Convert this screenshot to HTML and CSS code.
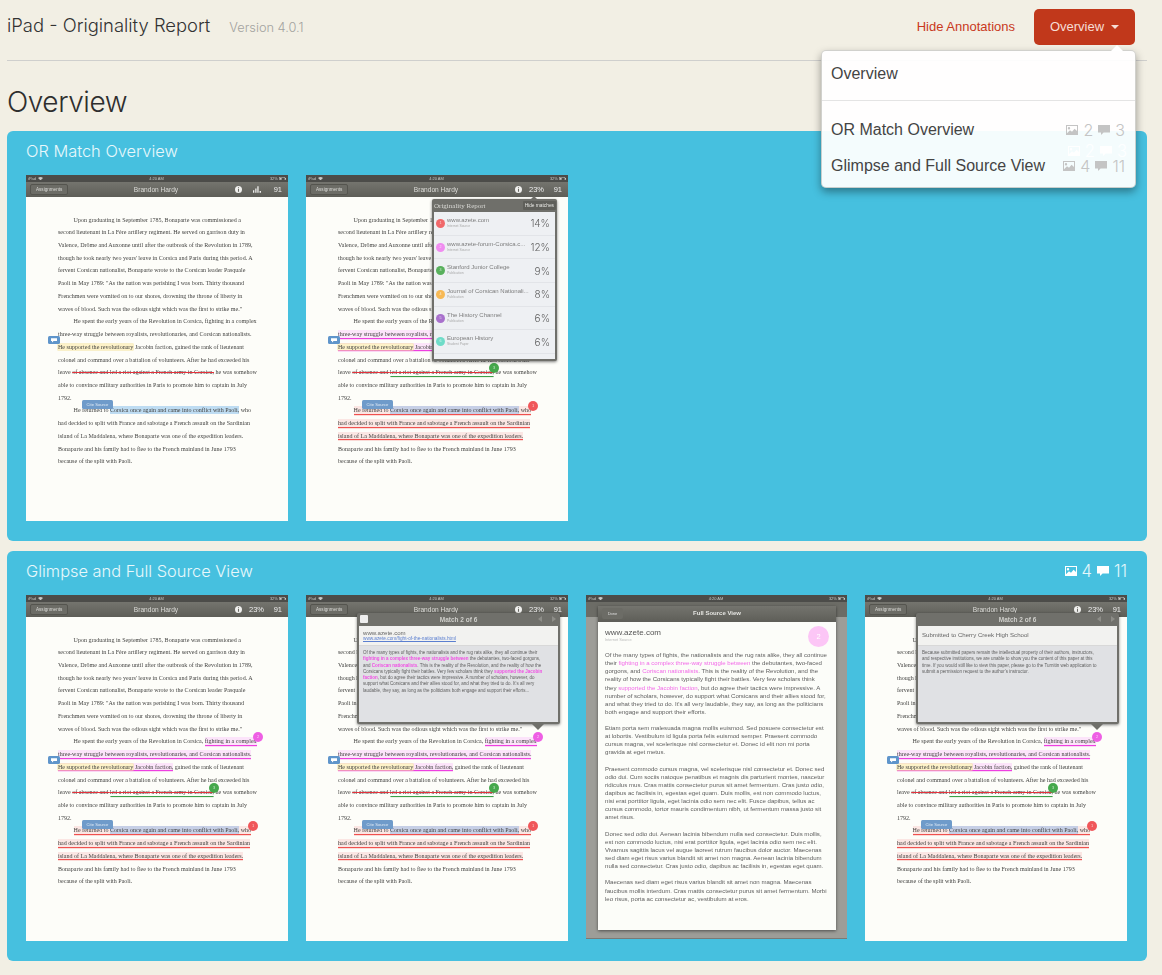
FILE: index.html
```html
<!DOCTYPE html>
<html lang="en">
<head>
<meta charset="utf-8">
<title>iPad - Originality Report</title>
<link rel="stylesheet" href="styles.css">
</head>
<body>
<svg class="defs" width="0" height="0" aria-hidden="true">
  <symbol id="i-img" viewBox="0 0 12 10"><path fill-rule="evenodd" d="M0 0h12v10H0zM1 1v7.2l3-3 2 1.6 2.6-3L11 6V1zM3 2a1.2 1.2 0 1 0 0 2.4A1.2 1.2 0 0 0 3 2z"/></symbol>
  <symbol id="i-msg" viewBox="0 0 12 10"><path d="M0 0h12v7.4H5.6L3 10V7.4H0z"/></symbol>
  <symbol id="i-info" viewBox="0 0 8 8"><path fill-rule="evenodd" d="M4 0a4 4 0 1 1 0 8 4 4 0 0 1 0-8zM3.4 1.4v1.1h1.2V1.4zM3.4 3.3v3.3h1.2V3.3z"/></symbol>
  <symbol id="i-bars" viewBox="0 0 10 8"><path d="M0 5h1.6v3H0zM2.8 2.6h1.6V8H2.8zM5.4 0H7v8H5.4zM8.2 6H10v2H8.2z"/></symbol>
  <symbol id="i-wifi" viewBox="0 0 6 4"><path d="M0 1.2C1.7-.4 4.3-.4 6 1.2L3 4z"/></symbol>
  <symbol id="i-batt" viewBox="0 0 8 4"><path fill-rule="evenodd" d="M0 0h7v1h1v2H7v1H0zM.5.5v3h6v-3zM1 1h2v2H1z"/></symbol>
</svg>

<header class="top">
  <div class="brand">
    <h1 class="brand-title">iPad - Originality Report</h1>
    <span class="brand-version">Version 4.0.1</span>
  </div>
  <a class="annot">Hide Annotations</a>
  <button class="menu-btn">Overview<i class="menu-caret"></i></button>
  <nav class="menu">
    <a class="menu-row menu-first">Overview</a>
    <a class="menu-row">OR Match Overview<span class="meta"><svg class="ic"><use href="#i-img"/></svg>2<svg class="ic ic-m"><use href="#i-msg"/></svg>3</span></a>
    <a class="menu-row">Glimpse and Full Source View<span class="meta"><svg class="ic"><use href="#i-img"/></svg>4<svg class="ic ic-m"><use href="#i-msg"/></svg>11</span></a>
  </nav>
</header>

<h2 class="page-title">Overview</h2>

<section class="panel">
  <div class="panel-head">
    <h3 class="panel-title">OR Match Overview</h3>
    <span class="panel-meta"><svg class="ic"><use href="#i-img"/></svg>2<svg class="ic ic-m"><use href="#i-msg"/></svg>3</span>
  </div>
  <div class="shots">

    <article class="shot">
      <div class="status"><span>iPad <svg class="wifi"><use href="#i-wifi"/></svg></span><span>4:20 AM</span><span>32% <svg class="batt"><use href="#i-batt"/></svg></span></div>
      <div class="bar">
        <span class="back">Assignments</span><span class="who">Brandon Hardy</span>
        <span class="tools"><svg class="t-info"><use href="#i-info"/></svg><svg class="t-bars"><use href="#i-bars"/></svg><b>91</b></span>
      </div>
      <div class="doc">
        <div class="ln in">Upon graduating in September 1785, Bonaparte was commissioned a</div>
        <div class="ln">second lieutenant in La Fère artillery regiment. He served on garrison duty in</div>
        <div class="ln">Valence, Drôme and Auxonne until after the outbreak of the Revolution in 1789,</div>
        <div class="ln">though he took nearly two years' leave in Corsica and Paris during this period. A</div>
        <div class="ln">fervent Corsican nationalist, Bonaparte wrote to the Corsican leader Pasquale</div>
        <div class="ln">Paoli in May 1789: "As the nation was perishing I was born. Thirty thousand</div>
        <div class="ln">Frenchmen were vomited on to our shores, drowning the throne of liberty in</div>
        <div class="ln">waves of blood. Such was the odious sight which was the first to strike me."</div>
        <div class="ln in">He spent the early years of the Revolution in Corsica, fighting in a complex</div>
        <div class="ln">three-way struggle between royalists, revolutionaries, and Corsican nationalists.</div>
        <div class="ln"><span class="yel">He supported the revolutionary</span> Jacobin faction, gained the rank of lieutenant</div>
        <div class="ln">colonel and command over a battalion of volunteers. After he had exceeded his</div>
        <div class="ln">leave <span class="strike">of absence and led a riot against a French army in Corsica,</span> he was somehow</div>
        <div class="ln">able to convince military authorities in Paris to promote him to captain in July</div>
        <div class="ln">1792.</div>
        <div class="ln in">He returned to <span class="blue">Corsica once again and came into conflict with Paoli,</span> who</div>
        <div class="ln">had decided to split with France and sabotage a French assault on the Sardinian</div>
        <div class="ln">island of La Maddalena, where Bonaparte was one of the expedition leaders.</div>
        <div class="ln">Bonaparte and his family had to flee to the French mainland in June 1793</div>
        <div class="ln">because of the split with Paoli.</div>
      </div>
      <svg class="chip" viewBox="0 0 12 8"><path d="M3 2.2h6v2.8H5.6L4 6.4V5H3z"/></svg>
      <span class="cite">Cite Source</span>
    </article>

    <article class="shot">
      <div class="status"><span>iPad <svg class="wifi"><use href="#i-wifi"/></svg></span><span>4:20 AM</span><span>32% <svg class="batt"><use href="#i-batt"/></svg></span></div>
      <div class="bar">
        <span class="back">Assignments</span><span class="who">Brandon Hardy</span>
        <span class="tools"><svg class="t-info"><use href="#i-info"/></svg><span class="pct">23%</span><b>91</b></span>
      </div>
      <div class="doc">
        <div class="ln in">Upon graduating in September 1785, Bonaparte was commissioned a</div>
        <div class="ln">second lieutenant in La Fère artillery regiment. He served on garrison duty in</div>
        <div class="ln">Valence, Drôme and Auxonne until after the outbreak of the Revolution in 1789,</div>
        <div class="ln">though he took nearly two years' leave in Corsica and Paris during this period. A</div>
        <div class="ln">fervent Corsican nationalist, Bonaparte wrote to the Corsican leader Pasquale</div>
        <div class="ln">Paoli in May 1789: "As the nation was perishing I was born. Thirty thousand</div>
        <div class="ln">Frenchmen were vomited on to our shores, drowning the throne of liberty in</div>
        <div class="ln">waves of blood. Such was the odious sight which was the first to strike me."</div>
        <div class="ln in">He spent the early years of the Revolution in Corsica, fighting in a complex</div>
        <div class="ln"><span class="pnk">three-way struggle between royalists, revolutionaries, and Corsican nationalists.</span></div>
        <div class="ln"><span class="pnk"><span class="yel">He supported the revolutionary</span> Jacobin faction,</span> gained the rank of lieutenant</div>
        <div class="ln">colonel and command over a battalion of volunteers. After he had exceeded his</div>
        <div class="ln">leave <span class="strike">of absence and <span class="grn">led a riot against a French army in Corsica,</span></span> he was somehow</div>
        <div class="ln">able to convince military authorities in Paris to promote him to captain in July</div>
        <div class="ln">1792.</div>
        <div class="ln in"><span class="red">He returned to <span class="blue2">Corsica once again and came into conflict with Paoli,</span> who</span></div>
        <div class="ln"><span class="red">had decided to split with France and sabotage a French assault on the Sardinian</span></div>
        <div class="ln"><span class="red">island of La Maddalena, where Bonaparte was one of the expedition leaders.</span></div>
        <div class="ln">Bonaparte and his family had to flee to the French mainland in June 1793</div>
        <div class="ln">because of the split with Paoli.</div>
      </div>
      <svg class="chip" viewBox="0 0 12 8"><path d="M3 2.2h6v2.8H5.6L4 6.4V5H3z"/></svg>
      <span class="cite">Cite Source</span>
      <span class="dot dot-g">3</span>
      <span class="dot dot-r">1</span>
      <div class="report">
        <i class="report-arrow"></i>
        <div class="report-head"><span>Originality Report</span><span class="hide">Hide matches</span></div>
        <ul class="report-list">
          <li class="src"><i class="num n1">1</i><span class="src-t"><b>www.azete.com</b><small>Internet Source</small></span><em>14%</em></li>
          <li class="src"><i class="num n2">2</i><span class="src-t"><b>www.azete-forum-Corsica.c...</b><small>Internet Source</small></span><em>12%</em></li>
          <li class="src"><i class="num n3">3</i><span class="src-t"><b>Stanford Junior College</b><small>Publication</small></span><em>9%</em></li>
          <li class="src"><i class="num n4">4</i><span class="src-t"><b>Journal of Corsican Nationali...</b><small>Publication</small></span><em>8%</em></li>
          <li class="src"><i class="num n5">5</i><span class="src-t"><b>The History Channel</b><small>Publication</small></span><em>6%</em></li>
          <li class="src"><i class="num n6">6</i><span class="src-t"><b>European History</b><small>Student Paper</small></span><em>6%</em></li>
        </ul>
      </div>
    </article>

  </div>
</section>

<section class="panel">
  <div class="panel-head">
    <h3 class="panel-title">Glimpse and Full Source View</h3>
    <span class="panel-meta"><svg class="ic"><use href="#i-img"/></svg>4<svg class="ic ic-m"><use href="#i-msg"/></svg>11</span>
  </div>
  <div class="shots">

    <article class="shot">
      <div class="status"><span>iPad <svg class="wifi"><use href="#i-wifi"/></svg></span><span>4:20 AM</span><span>32% <svg class="batt"><use href="#i-batt"/></svg></span></div>
      <div class="bar">
        <span class="back">Assignments</span><span class="who">Brandon Hardy</span>
        <span class="tools"><svg class="t-info"><use href="#i-info"/></svg><span class="pct">23%</span><b>91</b></span>
      </div>
      <div class="doc">
        <div class="ln in">Upon graduating in September 1785, Bonaparte was commissioned a</div>
        <div class="ln">second lieutenant in La Fère artillery regiment. He served on garrison duty in</div>
        <div class="ln">Valence, Drôme and Auxonne until after the outbreak of the Revolution in 1789,</div>
        <div class="ln">though he took nearly two years' leave in Corsica and Paris during this period. A</div>
        <div class="ln">fervent Corsican nationalist, Bonaparte wrote to the Corsican leader Pasquale</div>
        <div class="ln">Paoli in May 1789: "As the nation was perishing I was born. Thirty thousand</div>
        <div class="ln">Frenchmen were vomited on to our shores, drowning the throne of liberty in</div>
        <div class="ln">waves of blood. Such was the odious sight which was the first to strike me."</div>
        <div class="ln in">He spent the early years of the Revolution in Corsica, <span class="pnk">fighting in a complex</span></div>
        <div class="ln"><span class="pnk">three-way struggle between royalists, revolutionaries, and Corsican nationalists.</span></div>
        <div class="ln"><span class="pnk"><span class="yel">He supported the revolutionary</span> Jacobin faction,</span> gained the rank of lieutenant</div>
        <div class="ln">colonel and command over a battalion of volunteers. After he had exceeded his</div>
        <div class="ln">leave <span class="strike">of absence and <span class="grn">led a riot against a French army in Corsica,</span></span> he was somehow</div>
        <div class="ln">able to convince military authorities in Paris to promote him to captain in July</div>
        <div class="ln">1792.</div>
        <div class="ln in"><span class="red">He returned to <span class="blue2">Corsica once again and came into conflict with Paoli,</span> who</span></div>
        <div class="ln"><span class="red">had decided to split with France and sabotage a French assault on the Sardinian</span></div>
        <div class="ln"><span class="red">island of La Maddalena, where Bonaparte was one of the expedition leaders.</span></div>
        <div class="ln">Bonaparte and his family had to flee to the French mainland in June 1793</div>
        <div class="ln">because of the split with Paoli.</div>
      </div>
      <svg class="chip" viewBox="0 0 12 8"><path d="M3 2.2h6v2.8H5.6L4 6.4V5H3z"/></svg>
      <span class="cite">Cite Source</span>
      <span class="dot dot-p">2</span>
      <span class="dot dot-g">3</span>
      <span class="dot dot-r">1</span>
    </article>

    <article class="shot">
      <div class="status"><span>iPad <svg class="wifi"><use href="#i-wifi"/></svg></span><span>4:20 AM</span><span>32% <svg class="batt"><use href="#i-batt"/></svg></span></div>
      <div class="bar">
        <span class="back">Assignments</span><span class="who">Brandon Hardy</span>
        <span class="tools"><svg class="t-info"><use href="#i-info"/></svg><span class="pct">23%</span><b>91</b></span>
      </div>
      <div class="doc">
        <div class="ln in">Upon graduating in September 1785, Bonaparte was commissioned a</div>
        <div class="ln">second lieutenant in La Fère artillery regiment. He served on garrison duty in</div>
        <div class="ln">Valence, Drôme and Auxonne until after the outbreak of the Revolution in 1789,</div>
        <div class="ln">though he took nearly two years' leave in Corsica and Paris during this period. A</div>
        <div class="ln">fervent Corsican nationalist, Bonaparte wrote to the Corsican leader Pasquale</div>
        <div class="ln">Paoli in May 1789: "As the nation was perishing I was born. Thirty thousand</div>
        <div class="ln">Frenchmen were vomited on to our shores, drowning the throne of liberty in</div>
        <div class="ln">waves of blood. Such was the odious sight which was the first to strike me."</div>
        <div class="ln in">He spent the early years of the Revolution in Corsica, <span class="pnk">fighting in a complex</span></div>
        <div class="ln"><span class="pnk">three-way struggle between royalists, revolutionaries, and Corsican nationalists.</span></div>
        <div class="ln"><span class="pnk"><span class="yel">He supported the revolutionary</span> Jacobin faction,</span> gained the rank of lieutenant</div>
        <div class="ln">colonel and command over a battalion of volunteers. After he had exceeded his</div>
        <div class="ln">leave <span class="strike">of absence and <span class="grn">led a riot against a French army in Corsica,</span></span> he was somehow</div>
        <div class="ln">able to convince military authorities in Paris to promote him to captain in July</div>
        <div class="ln">1792.</div>
        <div class="ln in"><span class="red">He returned to <span class="blue2">Corsica once again and came into conflict with Paoli,</span> who</span></div>
        <div class="ln"><span class="red">had decided to split with France and sabotage a French assault on the Sardinian</span></div>
        <div class="ln"><span class="red">island of La Maddalena, where Bonaparte was one of the expedition leaders.</span></div>
        <div class="ln">Bonaparte and his family had to flee to the French mainland in June 1793</div>
        <div class="ln">because of the split with Paoli.</div>
      </div>
      <svg class="chip" viewBox="0 0 12 8"><path d="M3 2.2h6v2.8H5.6L4 6.4V5H3z"/></svg>
      <span class="cite">Cite Source</span>
      <span class="dot dot-p">2</span>
      <span class="dot dot-g">3</span>
      <span class="dot dot-r">1</span>
      <div class="glimpse">
        <i class="glimpse-arrow"></i>
        <div class="glimpse-head"><i class="expand"></i><span class="glimpse-title">Match 2 of 6</span><span class="pager"><i class="pg-l"></i><i class="pg-r"></i></span></div>
        <div class="glimpse-src"><div class="g-name">www.azete.com</div><div class="g-link">www.azete.com/fight-of-the-nationalists.html</div></div>
        <div class="glimpse-body">
          Of the many types of fights, the nationalists and the rug rats alike, they all continue their<br>
          <strong>fighting in a complex three-way struggle between</strong> the debutantes, two-faced gorgons,<br>
          and <strong>Coriscan nationalists</strong>. This is the reality of the Revolution, and the reality of how the<br>
          Corsicans typically fight their battles. Very few scholars think they <strong>supported the Jacobin</strong><br>
          <strong>faction</strong>, but do agree their tactics were impressive. A number of scholars, however, do<br>
          support what Corsicans and their allies stood for, and what they tried to do. It's all very<br>
          laudable, they say, as long as the politicians both engage and support their efforts...
        </div>
      </div>
    </article>

    <article class="shot shot-full">
      <div class="status"><span>iPad <svg class="wifi"><use href="#i-wifi"/></svg></span><span>4:20 AM</span><span>32% <svg class="batt"><use href="#i-batt"/></svg></span></div>
      <div class="bar bar-dim"></div>
      <div class="sheet">
        <div class="sheet-bar"><span class="done">Done</span><span class="sheet-title">Full Source View</span></div>
        <div class="sheet-body">
          <div class="sheet-name">www.azete.com</div>
          <div class="sheet-type">Internet Source</div>
          <span class="sheet-num">2</span>
          <p class="sp">Of the many types of fights, the nationalists and the rug rats alike, they all continue<br>
          their <mark>fighting in a complex three-way struggle between</mark> the debutantes, two-faced<br>
          gorgons, and <mark>Coriscan nationalists</mark>. This is the reality of the Revolution, and the<br>
          reality of how the Corsicans typically fight their battles. Very few scholars think<br>
          they <mark>supported the Jacobin faction</mark>, but do agree their tactics were impressive. A<br>
          number of scholars, however, do support what Corsicans and their allies stood for,<br>
          and what they tried to do. It's all very laudable, they say, as long as the politicians<br>
          both engage and support their efforts.</p>
          <p class="sp">Etiam porta sem malesuada magna mollis euismod. Sed posuere consectetur est<br>
          at lobortis. Vestibulum id ligula porta felis euismod semper. Praesent commodo<br>
          cursus magna, vel scelerisque nisl consectetur et. Donec id elit non mi porta<br>
          gravida at eget metus.</p>
          <p class="sp">Praesent commodo cursus magna, vel scelerisque nisl consectetur et. Donec sed<br>
          odio dui. Cum sociis natoque penatibus et magnis dis parturient montes, nascetur<br>
          ridiculus mus. Cras mattis consectetur purus sit amet fermentum. Cras justo odio,<br>
          dapibus ac facilisis in, egestas eget quam. Duis mollis, est non commodo luctus,<br>
          nisi erat porttitor ligula, eget lacinia odio sem nec elit. Fusce dapibus, tellus ac<br>
          cursus commodo, tortor mauris condimentum nibh, ut fermentum massa justo sit<br>
          amet risus.</p>
          <p class="sp">Donec sed odio dui. Aenean lacinia bibendum nulla sed consectetur. Duis mollis,<br>
          est non commodo luctus, nisi erat porttitor ligula, eget lacinia odio sem nec elit.<br>
          Vivamus sagittis lacus vel augue laoreet rutrum faucibus dolor auctor. Maecenas<br>
          sed diam eget risus varius blandit sit amet non magna. Aenean lacinia bibendum<br>
          nulla sed consectetur. Cras justo odio, dapibus ac facilisis in, egestas eget quam.</p>
          <p class="sp">Maecenas sed diam eget risus varius blandit sit amet non magna. Maecenas<br>
          faucibus mollis interdum. Cras mattis consectetur purus sit amet fermentum. Morbi<br>
          leo risus, porta ac consectetur ac, vestibulum at eros.</p>
        </div>
      </div>
    </article>

    <article class="shot">
      <div class="status"><span>iPad <svg class="wifi"><use href="#i-wifi"/></svg></span><span>4:20 AM</span><span>32% <svg class="batt"><use href="#i-batt"/></svg></span></div>
      <div class="bar">
        <span class="back">Assignments</span><span class="who">Brandon Hardy</span>
        <span class="tools"><svg class="t-info"><use href="#i-info"/></svg><span class="pct">23%</span><b>91</b></span>
      </div>
      <div class="doc">
        <div class="ln in">Upon graduating in September 1785, Bonaparte was commissioned a</div>
        <div class="ln">second lieutenant in La Fère artillery regiment. He served on garrison duty in</div>
        <div class="ln">Valence, Drôme and Auxonne until after the outbreak of the Revolution in 1789,</div>
        <div class="ln">though he took nearly two years' leave in Corsica and Paris during this period. A</div>
        <div class="ln">fervent Corsican nationalist, Bonaparte wrote to the Corsican leader Pasquale</div>
        <div class="ln">Paoli in May 1789: "As the nation was perishing I was born. Thirty thousand</div>
        <div class="ln">Frenchmen were vomited on to our shores, drowning the throne of liberty in</div>
        <div class="ln">waves of blood. Such was the odious sight which was the first to strike me."</div>
        <div class="ln in">He spent the early years of the Revolution in Corsica, <span class="pnk">fighting in a complex</span></div>
        <div class="ln"><span class="pnk">three-way struggle between royalists, revolutionaries, and Corsican nationalists.</span></div>
        <div class="ln"><span class="pnk"><span class="yel">He supported the revolutionary</span> Jacobin faction,</span> gained the rank of lieutenant</div>
        <div class="ln">colonel and command over a battalion of volunteers. After he had exceeded his</div>
        <div class="ln">leave <span class="strike">of absence and <span class="grn">led a riot against a French army in Corsica,</span></span> he was somehow</div>
        <div class="ln">able to convince military authorities in Paris to promote him to captain in July</div>
        <div class="ln">1792.</div>
        <div class="ln in"><span class="red">He returned to <span class="blue2">Corsica once again and came into conflict with Paoli,</span> who</span></div>
        <div class="ln"><span class="red">had decided to split with France and sabotage a French assault on the Sardinian</span></div>
        <div class="ln"><span class="red">island of La Maddalena, where Bonaparte was one of the expedition leaders.</span></div>
        <div class="ln">Bonaparte and his family had to flee to the French mainland in June 1793</div>
        <div class="ln">because of the split with Paoli.</div>
      </div>
      <svg class="chip" viewBox="0 0 12 8"><path d="M3 2.2h6v2.8H5.6L4 6.4V5H3z"/></svg>
      <span class="cite">Cite Source</span>
      <span class="dot dot-p">2</span>
      <span class="dot dot-g">3</span>
      <span class="dot dot-r">1</span>
      <div class="glimpse">
        <i class="glimpse-arrow"></i>
        <div class="glimpse-head"><span class="glimpse-title">Match 2 of 6</span><span class="pager"><i class="pg-l"></i><i class="pg-r"></i></span></div>
        <div class="glimpse-src glimpse-src-plain"><div class="g-name">Submitted to Cherry Creek High School</div></div>
        <div class="glimpse-body">
          Because submitted papers remain the intellectual property of their authors, instructors,<br>
          and respective institutions, we are unable to show you the content of this paper at this<br>
          time. If you would still like to view this paper, please go to the Turnitin web application to<br>
          submit a permission request to the author's instructor.
        </div>
      </div>
    </article>

  </div>
</section>
</body>
</html>
```
FILE: styles.css
```css
* { box-sizing: border-box; }
html, body { margin: 0; padding: 0; }
body {
  background: #f2efe4;
  padding: 0 15px 14px 7px;
  font-family: "Liberation Sans", Arial, sans-serif;
  color: #333;
}
.defs { position: absolute; }

/* Header */
.top {
  position: relative;
  display: flex;
  align-items: center;
  height: 61px;
  padding: 0 12px 7px 0;
  border-bottom: 1px solid #cfcfcd;
}
.brand { display: flex; align-items: baseline; gap: 19px; margin-right: auto; padding-bottom: 3px; }
.brand-title { margin: 0; font: 300 18.4px "Inter", sans-serif; color: #333; }
.brand-version { font: 300 12.8px "Inter", sans-serif; color: #a3a3a0; }
.annot { font-size: 13px; color: #c9391c; margin-right: 19px; }
.menu-btn {
  display: flex; align-items: center; justify-content: center; gap: 7px;
  width: 101px; height: 36px;
  border: 0; border-radius: 5px;
  background: #c1381b;
  color: #f6ddd5;
  font: 13px "Liberation Sans", Arial, sans-serif;
}
.menu-caret { width: 0; height: 0; border: 4px solid transparent; border-top: 4px solid #f6ddd5; border-bottom: 0; }
.menu {
  position: absolute; z-index: 5;
  top: 50px; right: 11px;
  width: 315px; height: 138px;
  background: rgba(255, 255, 255, .94);
  border: 1px solid rgba(90, 90, 80, .28);
  border-radius: 5px;
  box-shadow: 0 4px 9px rgba(0, 0, 0, .38);
  font-size: 16px;
  color: #444;
}
.menu::before {
  content: ""; position: absolute; top: -6px; right: 12px;
  border: 6px solid transparent; border-top: 0; border-bottom-color: #fff;
}
.menu-row { display: flex; justify-content: space-between; align-items: center; height: 36px; padding: 0 10px 0 9px; }
.menu-first { height: 50px; margin-bottom: 11px; padding-top: 3px; padding-bottom: 6px; border-bottom: 1px solid #e4e4e4; }
.meta { display: inline-flex; align-items: center; font: 300 16px "Inter", sans-serif; color: #c4c4c4; fill: #c4c4c4; }

.ic { width: 12px; height: 10px; margin-right: 5px; }
.ic-m { margin-left: 5px; }

/* Titles */
.page-title { margin: 0; height: 70px; padding-top: 23px; font: 300 28px/36px "Inter", sans-serif; color: #2e2e2e; letter-spacing: -.45px; }

/* Panels */
.panel {
  height: 410px;
  margin-bottom: 10px;
  padding: 0 20px 0 19px;
  background: #46c0df;
  border-radius: 6px;
}
.panel-head { display: flex; justify-content: space-between; align-items: center; height: 44px; padding-bottom: 4px; }
.panel-title { margin: 0; font: 300 16.4px "Inter", sans-serif; color: #e8f8fc; }
.panel-meta { display: inline-flex; align-items: center; font: 300 16.6px "Inter", sans-serif; color: #e4f7fb; fill: #fff; }
.shots { display: flex; gap: 18px; align-items: flex-start; }

/* Screenshot */
.shot {
  position: relative;
  flex: none;
  width: 262px; height: 346px;
  background: #fdfdf9;
  filter: blur(.28px);
}
.status {
  display: flex; justify-content: space-between;
  height: 7px; padding: 0 2px;
  background: #4c4c49;
  font-size: 4px; line-height: 7px; color: #c8c8c4;
}
.wifi { width: 5px; height: 3.4px; fill: #c8c8c4; margin-left: 1px; }
.batt { width: 7px; height: 3.5px; fill: #c8c8c4; }
.bar {
  display: grid; grid-template-columns: 1fr auto 1fr; align-items: center;
  height: 15px; padding: 0 6px 0 4px;
  background: linear-gradient(#74746e, #5e5e58);
  color: #dcdcd8;
}
.back {
  justify-self: start;
  padding: 0 5px; height: 11px;
  font-size: 4.6px; line-height: 10px;
  border: 1px solid #55554f; border-radius: 2px;
  background: #6c6c66;
}
.who { font-size: 6.6px; }
.tools { justify-self: end; display: flex; align-items: center; color: #eee; font-size: 7.5px; }
.tools b { font-weight: 400; width: 10px; text-align: right; }
.t-info { width: 7px; height: 7px; fill: #f0f0ee; margin-right: 7.5px; }
.t-bars { width: 8px; height: 7px; fill: #f0f0ee; margin-left: 4px; margin-right: 11px; }
.pct { width: 16px; margin-right: 7px; white-space: nowrap; }

.doc { padding: 16.6px 0 0 32px; }
.ln {
  height: 12.72px;
  font: 6.06px/12.72px "Liberation Serif", "Times New Roman", serif;
  white-space: nowrap;
  color: #444442;
}
.in { padding-left: 15.6px; }
.yel { background: #fdf2c8; box-shadow: 0 0 0 .5px #f5e39a; }
.blue { background: #bedcf2; padding: 1px 0; }
.blue2 { background: #c6cfe6; padding: 1px 0; }
.strike { text-decoration: line-through; text-decoration-color: #e5323c; text-decoration-thickness: 1px; }
.grn { box-shadow: 0 1.5px 0 -.4px #3aa047; padding-bottom: 1px; }
.pnk { background: #fce4fa; box-shadow: 0 1.2px 0 #ee3fe0; padding: 1px 0 .5px; }
.red { background: #fbe6e3; box-shadow: 0 1.2px 0 #f0504e; padding: 1px 0 .5px; }

.chip {
  position: absolute; left: 22px; top: 161px;
  width: 12px; height: 8px; border-radius: 1.5px;
  background: #5f95cb; fill: #fff;
}
.cite {
  position: absolute; left: 56px; top: 225px;
  width: 31px; height: 9px;
  background: #6f9bca; border-radius: 1.5px;
  color: #dfeaf5; font-size: 4.2px; line-height: 9px; text-align: center;
}
.dot {
  position: absolute; width: 10px; height: 10px; border-radius: 50%;
  font-size: 4px; line-height: 10px; text-align: center; color: rgba(255,255,255,.7);
}
.dot-g { left: 183px; top: 188px; background: #45a84c; }
.dot-r { left: 222px; top: 226px; background: #f0575a; }
.dot-p { left: 227px; top: 137px; background: #ee5fe4; }

/* Originality popover */
.report {
  position: absolute; left: 126px; top: 24px;
  width: 125px; height: 162px;
  padding: 0 2px 2px;
  background: #6f6f6a;
  border-radius: 2px;
  box-shadow: 0 1px 3px rgba(0,0,0,.5);
}
.report-arrow { position: absolute; right: 19px; top: -3px; border: 4px solid transparent; border-top: 0; border-bottom-color: #6f6f6a; }
.report-head { display: flex; justify-content: space-between; align-items: center; height: 13px; font: 7px "Liberation Serif", serif; color: #d8d8d4; }
.hide { margin-right: -1px; padding: 2px; background: #5f5f5a; font: 4.8px "Liberation Sans", sans-serif; color: #e6e6e2; border-radius: 1px; }
.report-list { margin: 0; padding: 0; list-style: none; height: 147px; background: #eef0f3; }
.src { display: flex; align-items: center; height: 23.7px; padding: 0 5px 0 2px; border-bottom: 1px solid #e2e4e8; }
.num { flex: none; width: 9px; height: 9px; border-radius: 50%; margin-right: 2px; font: normal 3.6px/9px "Liberation Sans", sans-serif; color: rgba(255,255,255,.7); text-align: center; }
.n1 { background: #f0686a; } .n2 { background: #f08cf0; } .n3 { background: #58b05c; }
.n4 { background: #f7b955; } .n5 { background: #a870cc; } .n6 { background: #6fdcc8; }
.src-t { flex: 1; min-width: 0; display: flex; flex-direction: column; margin-top: -1px; }
.src-t b { font-weight: 400; font-size: 6px; line-height: 7px; color: #7d7d7d; white-space: nowrap; }
.src-t small { font-size: 3.4px; line-height: 5px; color: #aaa; }
.src em { font: normal 300 10px "Inter", sans-serif; color: #5e5e5e; }

/* Glimpse popover */
.glimpse {
  position: absolute; left: 51px; top: 18px;
  width: 203px; height: 111px;
  padding: 0 2px 2px;
  background: #70706b;
  border-radius: 2px;
  box-shadow: 0 1px 3px rgba(0,0,0,.5);
}
.glimpse-arrow { position: absolute; left: 175px; bottom: -6px; border: 6px solid transparent; border-bottom: 0; border-top-color: #70706b; }
.glimpse-head { position: relative; display: flex; align-items: center; justify-content: center; height: 13px; color: #cfcfcb; font-size: 6.5px; font-weight: 700; }
.expand { position: absolute; left: 1px; top: 2px; width: 8px; height: 8px; background: #eee; border-radius: 1px; }
.pager { position: absolute; right: 2px; top: 3px; display: flex; gap: 10px; }
.pg-l { border: 3px solid transparent; border-left: 0; border-right: 4px solid #8d8d88; }
.pg-r { border: 3px solid transparent; border-right: 0; border-left: 4px solid #8d8d88; }
.glimpse-src { height: 20px; padding: 3px 4px; background: #f2f2f0; border-bottom: 1px solid #d8d8d8; }
.glimpse-src-plain { padding-top: 5px; }
.g-name { font-size: 6.1px; line-height: 7px; color: #666; }
.g-link { font-size: 4.75px; line-height: 6px; color: #5b7fd0; text-decoration: underline; white-space: nowrap; }
.glimpse-body { height: 76px; padding: 4px 4px; background: #e0e1e4; font-size: 4.5px; line-height: 6.25px; color: #5e5e5e; white-space: nowrap; }
.glimpse-body strong { color: #f04fe4; font-weight: 700; }

/* Full source sheet */
.shot-full { width: 261px; height: 344px; background: #9d9d98; border-bottom: 1px solid #7a7a76; }
.bar-dim { display: block; height: 15px; background: #6c6c66; }
.sheet {
  position: absolute; left: 12px; top: 11px;
  width: 238px; height: 324px;
  background: #fcfdf9;
  box-shadow: 0 1px 3px rgba(0,0,0,.5);
}
.sheet-bar { position: relative; height: 16px; background: linear-gradient(#74746e, #5e5e58); text-align: center; color: #e4e4e0; font-size: 6px; font-weight: 700; line-height: 15px; }
.done { position: absolute; left: 4px; top: 2px; width: 21px; height: 11px; line-height: 11px; background: #6c6c66; border-radius: 2px; font-size: 4px; font-weight: 400; color: #ddd; }
.sheet-body { position: relative; padding: 6px 7px; color: #666; }
.sheet-name { font-size: 8px; line-height: 9px; color: #555; }
.sheet-type { font-size: 3.9px; line-height: 6px; color: #bbb; margin-bottom: 8px; }
.sheet-num { position: absolute; right: 7px; top: 4px; width: 21px; height: 21px; border-radius: 50%; background: #fcc6f6; color: #fff; font-size: 7.5px; line-height: 21px; text-align: center; }
.sp { margin: 0 0 8.1px; font-size: 6.08px; line-height: 8.12px; white-space: nowrap; color: #5e5e5e; }
.sp mark { background: none; color: #f26ae8; }
```
